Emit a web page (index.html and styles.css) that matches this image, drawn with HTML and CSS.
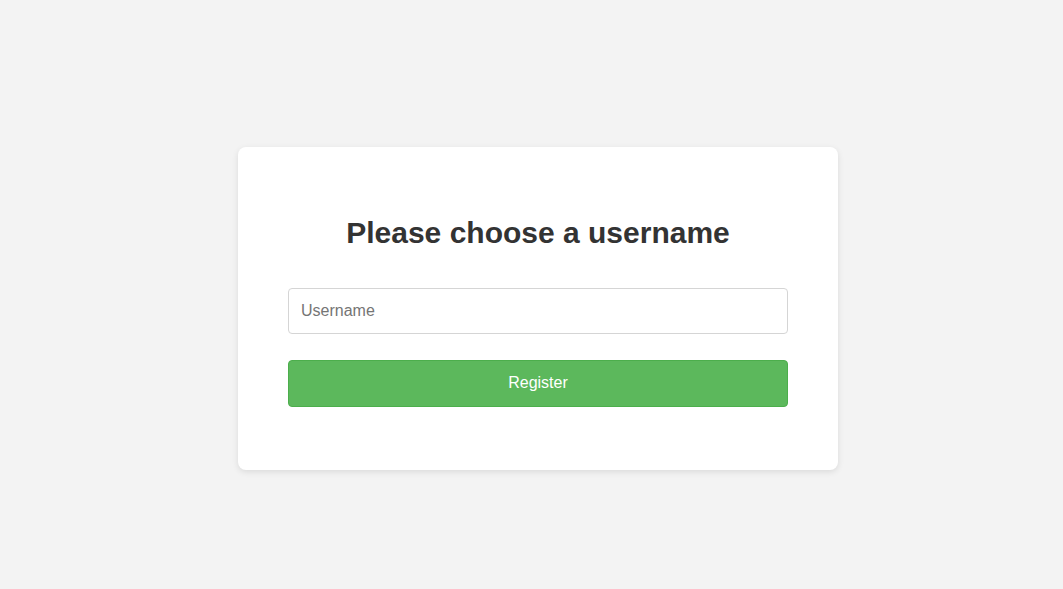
FILE: index.html
```html
<!DOCTYPE html>
<html lang="en">
<head>
<meta charset="utf-8">
<title>Register</title>
<link rel="stylesheet" href="styles.css">
</head>
<body>
  <div class="card">
    <h2 class="title">Please choose a username</h2>
    <form class="form">
      <input class="input" type="text" placeholder="Username">
      <button class="btn" type="button">Register</button>
    </form>
  </div>
</body>
</html>
```

FILE: styles.css
```css
html, body {
  margin: 0;
  padding: 0;
}
body {
  box-sizing: border-box;
  height: 100vh;
  padding: 27px 0 0 13px;
  background: #f3f3f3;
  font-family: "Liberation Sans", Arial, sans-serif;
  display: flex;
  align-items: center;
  justify-content: center;
}
.card {
  box-sizing: border-box;
  width: 600px;
  background: #fff;
  border-radius: 8px;
  box-shadow: 0 2px 6px rgba(0, 0, 0, 0.1);
  padding: 69px 50px 63px;
}
.title {
  margin: 0 0 38px;
  text-align: center;
  font-size: 30px;
  font-weight: bold;
  color: #333;
}
.form {
  display: flex;
  flex-direction: column;
  gap: 26px;
}
.input {
  box-sizing: border-box;
  height: 46px;
  padding: 1px 12px 0;
  border: 1px solid #d5d5d5;
  border-radius: 4px;
  font-family: inherit;
  font-size: 16px;
  color: #333;
  outline: none;
}
.input::placeholder {
  color: #757575;
}
.btn {
  box-sizing: border-box;
  height: 47px;
  padding-top: 1px;
  border: 1px solid #4cae4c;
  border-radius: 4px;
  background: #5cb85c;
  color: #fff;
  font-family: inherit;
  font-size: 16px;
  cursor: pointer;
}
```
